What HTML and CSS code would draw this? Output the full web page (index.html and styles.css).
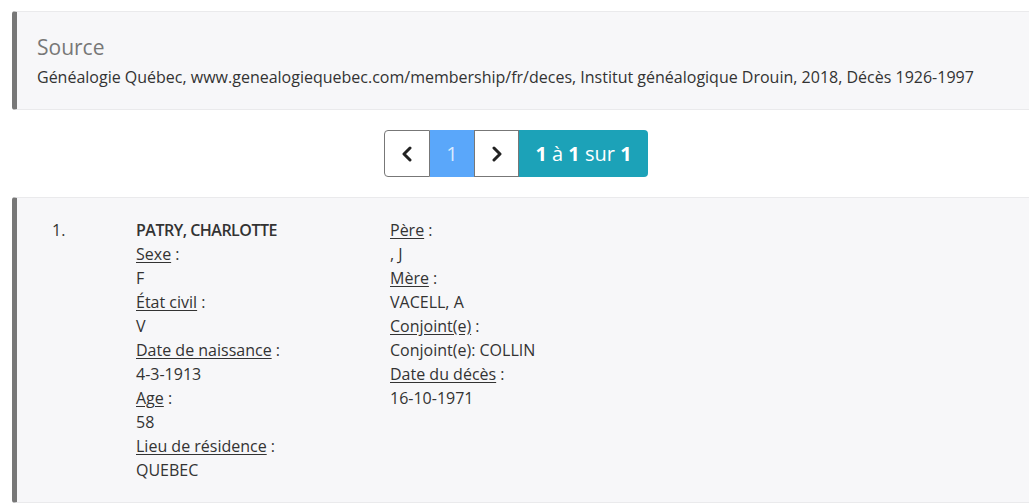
FILE: index.html
```html
<!DOCTYPE html>
<html lang="fr">
<head>
<meta charset="utf-8">
<title>Décès</title>
<link rel="stylesheet" href="styles.css">
</head>
<body>
<div class="page">
  <div class="callout source">
    <h4 class="source-title">Source</h4>
    <p class="source-text">Généalogie Québec, www.genealogiequebec.com/membership/fr/deces, Institut généalogique Drouin, 2018, Décès 1926-1997</p>
  </div>

  <nav class="pager">
    <a class="pg pg-arrow pg-prev" href="#" aria-label="Précédent">
      <svg width="14" height="16" viewBox="0 0 14 16"><path d="M10 2 L4 8 L10 14" fill="none" stroke="#222" stroke-width="3" stroke-linecap="round" stroke-linejoin="round"/></svg>
    </a>
    <span class="pg pg-current">1</span>
    <a class="pg pg-arrow pg-next" href="#" aria-label="Suivant">
      <svg width="14" height="16" viewBox="0 0 14 16"><path d="M4 2 L10 8 L4 14" fill="none" stroke="#222" stroke-width="3" stroke-linecap="round" stroke-linejoin="round"/></svg>
    </a>
    <span class="pg pg-info"><b>1</b> à <b>1</b> sur <b>1</b></span>
  </nav>

  <div class="callout record">
    <div class="rec-num">1.</div>
    <div class="rec-col">
      <div class="rec-name">PATRY, CHARLOTTE</div>
      <div><span class="lbl">Sexe</span> :</div>
      <div>F</div>
      <div><span class="lbl">État civil</span> :</div>
      <div>V</div>
      <div><span class="lbl">Date de naissance</span> :</div>
      <div>4-3-1913</div>
      <div><span class="lbl">Age</span> :</div>
      <div>58</div>
      <div><span class="lbl">Lieu de résidence</span> :</div>
      <div>QUEBEC</div>
    </div>
    <div class="rec-col">
      <div><span class="lbl">Père</span> :</div>
      <div>, J</div>
      <div><span class="lbl">Mère</span> :</div>
      <div>VACELL, A</div>
      <div><span class="lbl">Conjoint(e)</span> :</div>
      <div>Conjoint(e): COLLIN</div>
      <div><span class="lbl">Date du décès</span> :</div>
      <div>16-10-1971</div>
    </div>
  </div>
</div>
</body>
</html>
```

FILE: styles.css
```css
html, body {
  margin: 0;
  padding: 0;
  background: #fff;
  overflow: hidden;
}
body {
  font-family: "Open Sans", "Liberation Sans", sans-serif;
  font-size: 16px;
  line-height: 24px;
  color: #333;
}
.page {
  padding: 11px 9px 0 12px;
}
.callout {
  background: #f7f7f9;
  border: 1px solid #eaeaec;
  border-left: 5px solid #777;
  border-radius: 3px;
  margin-right: -20px;
}
.source {
  padding: 20px 20px 20px 20px;
}
.source-title {
  margin: 0 0 3px;
  font-size: 21px;
  font-weight: 400;
  line-height: 30px;
  color: #777;
}
.source-text {
  margin: 0;
}
.pager {
  display: flex;
  justify-content: center;
  margin: 20px 0 20px;
}
.pg {
  display: flex;
  align-items: center;
  justify-content: center;
  height: 47px;
  box-sizing: border-box;
  text-decoration: none;
  font-size: 20px;
}
.pg-arrow {
  width: 45px;
  background: #fff;
  border: 1px solid #777;
}
.pg-prev {
  width: 46px;
  border-radius: 4px 0 0 4px;
}
.pg-current {
  width: 44px;
  background: #5aa7fa;
  color: #d9ebff;
}
.pg-info {
  width: 129px;
  background: #1ca2b8;
  color: #fff;
  border-radius: 0 4px 4px 0;
  white-space: pre;
}
.pg-info b {
  font-weight: 700;
}
.record {
  display: grid;
  grid-template-columns: 84px 254px 1fr;
  padding: 20px 20px 20px 35px;
}
.rec-name {
  font-weight: 600;
  letter-spacing: -0.5px;
}
.lbl {
  text-decoration: underline;
  text-underline-offset: 2px;
}
```
